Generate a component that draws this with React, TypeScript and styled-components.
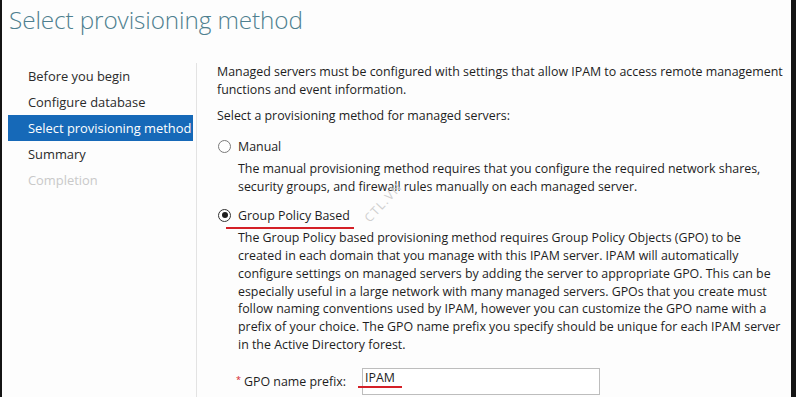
import React, { useState } from "react";
import styled, { createGlobalStyle } from "styled-components";

const GlobalStyle = createGlobalStyle`
  html, body {
    margin: 0;
    padding: 0;
    background: #fdfdfd;
  }
  * {
    box-sizing: border-box;
  }
`;

const Frame = styled.div`
  position: relative;
  width: 796px;
  height: 397px;
  overflow: hidden;
  background: #fdfdfd;
  border-left: 2px solid #141414;
  border-right: 5px solid #141414;
  font-family: "Open Sans", "Noto Sans", sans-serif;
  font-size: 12.4px;
  color: #1e1e1e;
`;

const Title = styled.h1`
  margin: 0;
  padding: 2px 0 0 7px;
  height: 63px;
  font-family: "Open Sans", "Noto Sans", sans-serif;
  font-size: 24.3px;
  font-weight: 300;
  line-height: 36px;
  color: #4e7f8f;
  letter-spacing: -0.1px;
`;

const Body = styled.div`
  display: grid;
  grid-template-columns: 195px 1fr;
  height: 334px;
`;

const Nav = styled.ul`
  list-style: none;
  margin: 0;
  padding: 0 0 0 6px;
  border-right: 1px solid #e3e3e3;
`;

const NavItem = styled.li<{ $active?: boolean; $disabled?: boolean }>`
  width: 185px;
  height: 26px;
  padding-left: 20px;
  display: flex;
  align-items: center;
  font-size: 12.9px;
  white-space: nowrap;
  background: ${(p) => (p.$active ? "#1669b8" : "transparent")};
  color: ${(p) => (p.$active ? "#ffffff" : p.$disabled ? "#c9c9c9" : "#2a2a2a")};
`;

const Content = styled.div`
  position: relative;
  min-width: 0;
  padding: 0 0 0 20px;
`;

const Para = styled.div`
  margin: 0;
`;

const Line = styled.span`
  display: block;
  height: 17.7px;
  line-height: 17.7px;
  white-space: nowrap;
`;

const Prompt = styled(Para)`
  margin-top: 9px;
`;

const Option = styled.div<{ $gap: number }>`
  margin-top: ${(p) => p.$gap}px;
`;

const RadioRow = styled.label`
  display: flex;
  align-items: center;
  gap: 7px;
  height: 18px;
  cursor: pointer;
`;

const RadioDot = styled.span<{ $checked: boolean }>`
  position: relative;
  width: 13px;
  height: 13px;
  margin-left: 1px;
  border-radius: 50%;
  border: 1px solid ${(p) => (p.$checked ? "#333" : "#7a7a7a")};
  background: #fff;

  &::after {
    content: "";
    display: ${(p) => (p.$checked ? "block" : "none")};
    position: absolute;
    left: 2.5px;
    top: 2.5px;
    width: 6px;
    height: 6px;
    border-radius: 50%;
    background: #1e1e1e;
  }
`;

const RadioLabel = styled.span<{ $marked?: boolean }>`
  position: relative;

  &::after {
    content: "";
    display: ${(p) => (p.$marked ? "block" : "none")};
    position: absolute;
    left: -12px;
    right: -4px;
    bottom: -5px;
    height: 2px;
    background: #d42027;
  }
`;

const Description = styled(Para)`
  padding-left: 21px;
  margin-top: 5px;
`;

const FieldRow = styled.div`
  display: flex;
  align-items: center;
  margin-top: 15px;
  padding-left: 19px;
`;

const FieldLabel = styled.label`
  width: 126px;
  white-space: nowrap;
`;

const Required = styled.span`
  color: #d42027;
  font-size: 9px;
  vertical-align: top;
  margin-right: 3px;
`;

const InputWrap = styled.div`
  position: relative;

  &::after {
    content: "";
    position: absolute;
    left: -4px;
    top: 18px;
    width: 44px;
    height: 2px;
    background: #d42027;
  }
`;

const Input = styled.input`
  width: 238px;
  height: 27px;
  padding: 0 0 8px 2px;
  border: 1px solid #bdbdbd;
  background: #fff;
  font-family: "Open Sans", "Noto Sans", sans-serif;
  font-size: 12.4px;
  color: #1e1e1e;
  outline: none;
`;

const Watermark = styled.span`
  position: absolute;
  left: 175px;
  top: 148px;
  font-family: "Open Sans", "Noto Sans", sans-serif;
  font-size: 12px;
  line-height: 14px;
  letter-spacing: 1.5px;
  color: #cfcfcf;
  transform: rotate(-47deg);
  transform-origin: left bottom;
  pointer-events: none;
`;

const steps = [
  "Before you begin",
  "Configure database",
  "Select provisioning method",
  "Summary",
  "Completion",
];

const intro = [
  "Managed servers must be configured with settings that allow IPAM to access remote management",
  "functions and event information.",
];

const manualText = [
  "The manual provisioning method requires that you configure the required network shares,",
  "security groups, and firewall rules manually on each managed server.",
];

const gpoText = [
  "The Group Policy based provisioning method requires Group Policy Objects (GPO) to be",
  "created in each domain that you manage with this IPAM server. IPAM will automatically",
  "configure settings on managed servers by adding the server to appropriate GPO. This can be",
  "especially useful in a large network with many managed servers. GPOs that you create must",
  "follow naming conventions used by IPAM, however you can customize the GPO name with a",
  "prefix of your choice. The GPO name prefix you specify should be unique for each IPAM server",
  "in the Active Directory forest.",
];

const Lines = ({ lines }: { lines: string[] }) => (
  <>
    {lines.map((l) => (
      <Line key={l}>{l}</Line>
    ))}
  </>
);

export default function App() {
  const [method, setMethod] = useState("gpo");
  const [prefix, setPrefix] = useState("IPAM");

  return (
    <>
      <GlobalStyle />
      <Frame>
        <Title>Select provisioning method</Title>
        <Body>
          <Nav>
            {steps.map((s, i) => (
              <NavItem key={s} $active={i === 2} $disabled={i === 4}>
                {s}
              </NavItem>
            ))}
          </Nav>
          <Content>
            <Para>
              <Lines lines={intro} />
            </Para>
            <Prompt>
              <Line>Select a provisioning method for managed servers:</Line>
            </Prompt>

            <Option $gap={12}>
              <RadioRow onClick={() => setMethod("manual")}>
                <RadioDot $checked={method === "manual"} />
                <RadioLabel>Manual</RadioLabel>
              </RadioRow>
              <Description>
                <Lines lines={manualText} />
              </Description>
            </Option>

            <Option $gap={11}>
              <RadioRow onClick={() => setMethod("gpo")}>
                <RadioDot $checked={method === "gpo"} />
                <RadioLabel $marked>Group Policy Based</RadioLabel>
              </RadioRow>
              <Description>
                <Lines lines={gpoText} />
              </Description>
            </Option>

            <FieldRow>
              <FieldLabel htmlFor="prefix">
                <Required>*</Required>GPO name prefix:
              </FieldLabel>
              <InputWrap>
                <Input id="prefix" value={prefix} onChange={(e) => setPrefix(e.target.value)} />
              </InputWrap>
            </FieldRow>

            <Watermark>CTL.VN</Watermark>
          </Content>
        </Body>
      </Frame>
    </>
  );
}
